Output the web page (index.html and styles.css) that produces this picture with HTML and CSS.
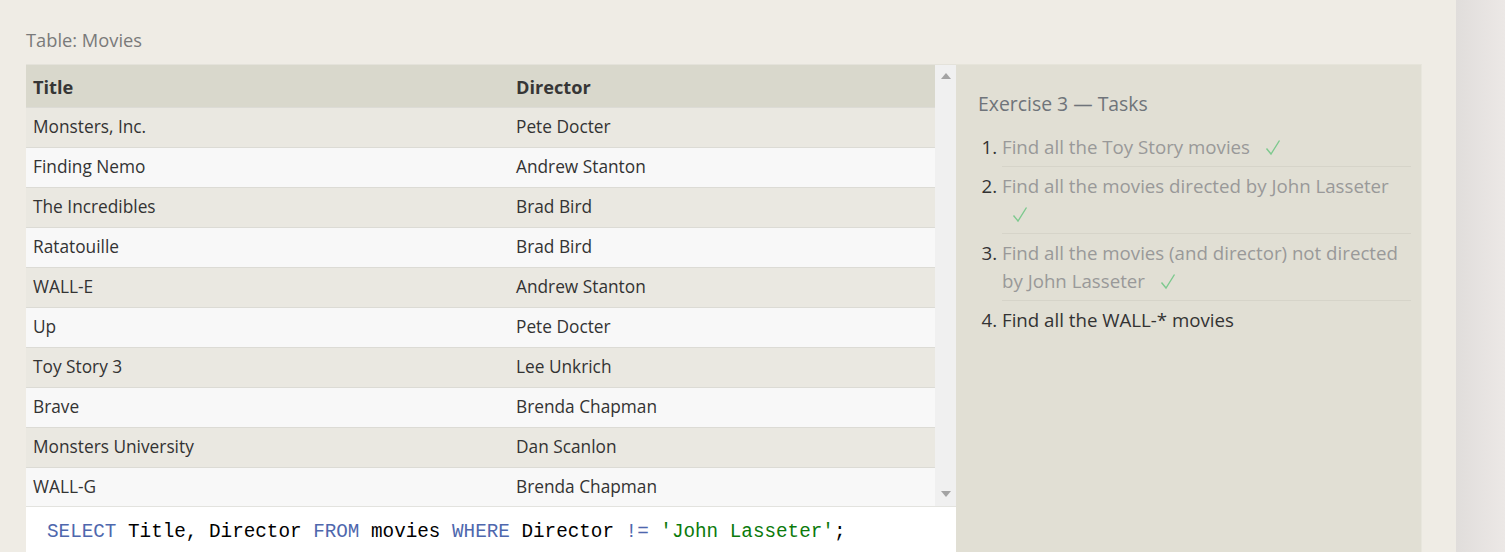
FILE: index.html
```html
<!DOCTYPE html>
<html>
<head>
<meta charset="utf-8">
<link rel="stylesheet" href="styles.css">
</head>
<body>
<div class="page">
  <main class="main">
    <div class="table-label">Table: Movies</div>
    <div class="workspace">
      <section class="left">
        <div class="scroller">
          <table class="data">
            <thead>
              <tr><th class="c1">Title</th><th>Director</th></tr>
            </thead>
            <tbody>
              <tr><td class="c1">Monsters, Inc.</td><td>Pete Docter</td></tr>
              <tr><td class="c1">Finding Nemo</td><td>Andrew Stanton</td></tr>
              <tr><td class="c1">The Incredibles</td><td>Brad Bird</td></tr>
              <tr><td class="c1">Ratatouille</td><td>Brad Bird</td></tr>
              <tr><td class="c1">WALL-E</td><td>Andrew Stanton</td></tr>
              <tr><td class="c1">Up</td><td>Pete Docter</td></tr>
              <tr><td class="c1">Toy Story 3</td><td>Lee Unkrich</td></tr>
              <tr><td class="c1">Brave</td><td>Brenda Chapman</td></tr>
              <tr><td class="c1">Monsters University</td><td>Dan Scanlon</td></tr>
              <tr><td class="c1">WALL-G</td><td>Brenda Chapman</td></tr>
            </tbody>
          </table>
          <div class="scrollbar">
            <span class="arrow up"></span>
            <span class="arrow down"></span>
          </div>
        </div>
        <div class="editor"><span class="kw">SELECT</span> Title, Director <span class="kw">FROM</span> movies <span class="kw">WHERE</span> Director <span class="kw">!=</span> <span class="str">'John Lasseter'</span>;</div>
      </section>
      <aside class="panel">
        <h2 class="panel-title">Exercise 3 — Tasks</h2>
        <ol class="tasks">
          <li class="done"><span class="t">Find all the Toy Story movies</span> <span class="check"><svg width="16" height="17" viewBox="0 0 16 17"><path d="M1.5 9.5 L6 15 L14.5 1.5" fill="none" stroke="#7dc98e" stroke-width="1.4"/></svg></span></li>
          <li class="done"><span class="t">Find all the movies directed by John Lasseter</span> <span class="check"><svg width="16" height="17" viewBox="0 0 16 17"><path d="M1.5 9.5 L6 15 L14.5 1.5" fill="none" stroke="#7dc98e" stroke-width="1.4"/></svg></span></li>
          <li class="done"><span class="t">Find all the movies (and director) not directed by John Lasseter</span> <span class="check"><svg width="16" height="17" viewBox="0 0 16 17"><path d="M1.5 9.5 L6 15 L14.5 1.5" fill="none" stroke="#7dc98e" stroke-width="1.4"/></svg></span></li>
          <li class="current"><span class="t">Find all the WALL-* movies</span></li>
        </ol>
        <p class="hint">Stuck? Read this task's <span class="link">Solution</span>.</p>
      </aside>
    </div>
  </main>
  <div class="edge"></div>
</div>
</body>
</html>
```
FILE: styles.css
```css
html, body {
  margin: 0;
  padding: 0;
  height: 100%;
  overflow: hidden;
}
body {
  background: #efece5;
  font-family: "Open Sans", "Noto Sans", sans-serif;
  color: #333;
}
.page {
  display: flex;
  height: 552px;
  overflow: hidden;
}
.main {
  width: 1456px;
  flex: none;
  padding: 27px 0 0 26px;
  box-sizing: border-box;
}
.edge {
  flex: 1;
  background: linear-gradient(to right, #e0dddb, #ece8e6);
}
.table-label {
  font-size: 18.3px;
  line-height: 26px;
  color: #7a7a7a;
  height: 37px;
}
.workspace {
  display: flex;
  align-items: flex-start;
}
.left {
  width: 930px;
  flex: none;
  border-top: 1px solid #e4e2da;
}
.scroller {
  display: flex;
  height: 441px;
  overflow: hidden;
  border-bottom: 1px solid #e3e3df;
}
.data {
  width: 909px;
  flex: none;
  align-self: flex-start;
  border-collapse: collapse;
  table-layout: fixed;
  font-size: 17.3px;
}
.data th, .data td {
  text-align: left;
  padding: 0 0 0 7px;
  white-space: nowrap;
}
.data th.c1 { width: 476px; }
.data th {
  height: 40px;
  padding-top: 2px;
  background: #d9d8cc;
  font-weight: 700;
  font-size: 18.2px;
  color: #363636;
}
.data td {
  height: 37px;
  padding-bottom: 2px;
  border-top: 1px solid #dcdbd5;
  color: #333;
}
.data tbody tr:nth-child(odd) td { background: #eae8e1; }
.data tbody tr:nth-child(even) td { background: #f8f8f8; }
.scrollbar {
  width: 21px;
  flex: none;
  background: #f0f0f0;
  display: flex;
  flex-direction: column;
  justify-content: space-between;
  align-items: center;
  padding: 8px 0 9px;
  box-sizing: border-box;
}
.arrow {
  width: 0;
  height: 0;
  border-left: 5px solid transparent;
  border-right: 5px solid transparent;
}
.arrow.up { border-bottom: 6px solid #a3a3a3; }
.arrow.down { border-top: 6px solid #a3a3a3; }
.editor {
  background: #fff;
  height: 60px;
  padding: 12px 0 0 21px;
  box-sizing: border-box;
  font-family: "Liberation Mono", "DejaVu Sans Mono", monospace;
  font-size: 19.3px;
  line-height: 26px;
  color: #000;
  white-space: pre;
}
.kw { color: #4e67ad; }
.str { color: #0b7a0b; }
.panel {
  width: 466px;
  flex: none;
  height: 520px;
  display: flex;
  flex-direction: column;
  background: #e1dfd4;
  border-top: 1px solid #e6e4da;
  border-right: 1px solid #e8e6dd;
  padding: 26px 10px 10px 22px;
  box-sizing: border-box;
}
.panel-title {
  margin: 0 0 11px;
  font-weight: 400;
  font-size: 19.4px;
  line-height: 26px;
  color: #6f747a;
}
.tasks {
  margin: 0;
  padding: 0 0 0 24px;
  font-size: 18.7px;
  line-height: 28px;
}
.tasks li {
  padding: 5px 0 5px;
  border-bottom: 1px solid #d6d4c9;
  color: #333;
}
.tasks li:last-child { border-bottom: none; }
.tasks li.done .t { color: #999; }
.check {
  display: inline-block;
  padding-left: 10px;
  vertical-align: -2px;
}
.check svg { display: block; }
.hint {
  margin: auto 0 0;
  font-size: 18px;
  line-height: 28px;
  color: #888;
}
.link { color: #4e67ad; }
```
